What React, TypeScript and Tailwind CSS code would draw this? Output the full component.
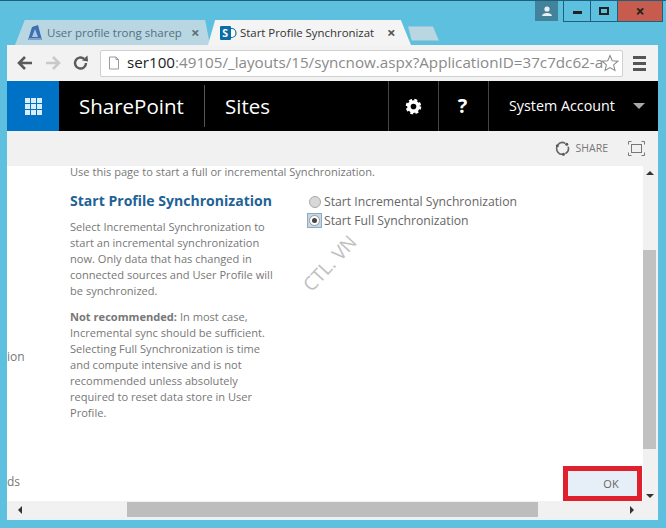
import React from "react";

const seg = "font-['Open_Sans','Noto_Sans',sans-serif]";

function Grid() {
  return (
    <div className="grid grid-cols-3 gap-[1px] w-[17px] h-[17px]">
      {Array.from({ length: 9 }).map((_, i) => (
        <div key={i} className="bg-[#d8ecfa]" />
      ))}
    </div>
  );
}

export default function App() {
  return (
    <div className={`relative w-[666px] h-[528px] overflow-hidden bg-[#5cc0de] flex flex-col border-t border-[#1d5f7c] ${seg}`}>
      {/* Title row */}
      <div className="h-[44px] flex justify-between pl-[15px] pr-[3px] shrink-0">
        <div className="flex items-end">
          <div className="w-[195px] h-[25px] bg-[#b9d6e3] flex items-center pl-[12px] [clip-path:polygon(5%_0,97.5%_0,100%_100%,0_100%)]">
            <svg width="17" height="17" viewBox="0 0 17 17" className="shrink-0">
              <path d="M1 16 L5 3 L11 1 L15 16 Z" fill="#3f6fae" />
              <path d="M5 13 L8 5 L11 13 Z" fill="#a9c6e6" />
              <path d="M1 16 H15 L14 14 H2 Z" fill="#7da4cf" />
            </svg>
            <span className="ml-[3px] text-[11.5px] text-[#56707f] whitespace-nowrap leading-none w-[141px]">User profile trong sharep</span>
            <span className="ml-[3px] text-[15px] font-bold text-[#5f6f78] leading-none">×</span>
          </div>
          <div className="-ml-[2px] w-[203px] h-[25px] bg-[#f4f4f4] flex items-center pl-[12px] [clip-path:polygon(3.5%_0,95%_0,100%_100%,0_100%)]">
            <svg width="17" height="16" viewBox="0 0 17 16" className="shrink-0">
              <circle cx="11.5" cy="8" r="4.5" fill="#fff" stroke="#0a6ea5" strokeWidth="1.2" />
              <rect x="0" y="1" width="11" height="14" rx="1" fill="#0a6ea5" />
              <text x="2.3" y="12" fontSize="10.5" fontWeight="700" fill="#fff" fontFamily="Open Sans">S</text>
            </svg>
            <span className="ml-[3px] text-[11.4px] text-[#333] whitespace-nowrap leading-none w-[145px]">Start Profile Synchronizat</span>
            <span className="ml-[2px] text-[15px] font-bold text-[#555] leading-none">×</span>
          </div>
          <div className="-ml-[3px] w-[31px] h-[15px] mb-[4px] bg-[#b9d6e3] border border-[#9cc3d6] [clip-path:polygon(0_0,80%_0,100%_100%,12%_100%)]" />
        </div>
        <div className="flex items-start">
          <div className="w-[23px] h-[20px] bg-[#43829b] flex items-center justify-center mr-[5px]">
            <svg width="12" height="10" viewBox="0 0 12 10">
              <circle cx="6" cy="3" r="2.6" fill="#e8f1f5" />
              <path d="M1 10 C1 6 11 6 11 10 Z" fill="#e8f1f5" />
            </svg>
          </div>
          <div className="w-[28px] h-[21px] border border-t-0 border-[#1d5f7c] flex items-center justify-center">
            <div className="w-[9px] h-[3px] mt-[3px] bg-[#222]" />
          </div>
          <div className="w-[26px] h-[21px] border-b border-[#1d5f7c] flex items-center justify-center">
            <div className="w-[10px] h-[8px] border-2 border-[#222]" />
          </div>
          <div className="w-[46px] h-[21px] bg-[#c75b4e] border border-t-0 border-[#1d5f7c] flex items-center justify-center text-[#222] text-[16px] font-bold leading-none">
            ×
          </div>
        </div>
      </div>

      {/* Chrome and page */}
      <div className="mx-[7px] mb-[8px] w-[651px] flex-1 flex flex-col min-h-0">
        {/* Toolbar */}
        <div className="h-[36px] bg-[#f2f2f2] flex items-center shrink-0 pl-[9px] pr-[9px]">
          <svg width="18" height="16" viewBox="0 0 18 16" className="shrink-0">
            <path d="M9 2 L3 8 L9 14 M3 8 H16" fill="none" stroke="#5a5a5a" strokeWidth="2.6" />
          </svg>
          <svg width="18" height="16" viewBox="0 0 18 16" className="shrink-0 ml-[10px]">
            <path d="M9 2 L15 8 L9 14 M15 8 H2" fill="none" stroke="#c9c9c9" strokeWidth="2.6" />
          </svg>
          <svg width="18" height="18" viewBox="0 0 18 18" className="shrink-0 ml-[10px]">
            <path d="M14 9 A5.5 5.5 0 1 1 12 4.8" fill="none" stroke="#5a5a5a" strokeWidth="2.4" />
            <path d="M10 6.5 L16 7.5 L15.5 1.5 Z" fill="#5a5a5a" />
          </svg>
          <div className="ml-[10px] w-[523px] h-[27px] bg-white border border-[#d0d0d0] rounded-[2px] flex items-center pl-[7px] pr-[24px] relative shrink-0">
            <svg width="12" height="14" viewBox="0 0 12 14" className="shrink-0">
              <path d="M1.5 1 H8 L10.5 3.5 V13 H1.5 Z M8 1 V3.5 H10.5" fill="#fff" stroke="#9a9a9a" />
            </svg>
            <span className="ml-[7px] text-[15.2px] whitespace-nowrap leading-none text-[#8a8a8a]">
              <span className="text-[#222]">ser100</span>:49105/_layouts/15/syncnow.aspx?ApplicationID=37c7dc62-a
            </span>
            <div className="absolute right-0 top-0 h-full w-[24px] flex items-center justify-center">
              <svg width="18" height="18" viewBox="0 0 24 24">
                <path d="M12 2 L15 9 L22.5 9.6 L16.8 14.5 L18.6 22 L12 18 L5.4 22 L7.2 14.5 L1.5 9.6 L9 9 Z" fill="#fff" stroke="#8a8a8a" strokeWidth="1.4" />
              </svg>
            </div>
          </div>
          <div className="ml-[10px] flex flex-col gap-[3px] w-[13px] shrink-0">
            <div className="h-[3px] bg-[#555]" />
            <div className="h-[3px] bg-[#555]" />
            <div className="h-[3px] bg-[#555]" />
          </div>
        </div>

        {/* Suite bar */}
        <div className="h-[50px] bg-black flex items-stretch shrink-0 text-white">
          <div className="w-[52px] bg-[#0072c6] flex items-center justify-center">
            <Grid />
          </div>
          <div className="w-[145px] flex items-center pl-[20px] text-[20.5px] leading-none">SharePoint</div>
          <div className="w-px my-[4px] bg-[#555]" />
          <div className="w-[183px] flex items-center pl-[20px] text-[20.5px] leading-none">Sites</div>
          <div className="w-px bg-[#444]" />
          <div className="w-[49px] flex items-center justify-center">
            <svg width="17" height="17" viewBox="0 0 24 24">
              <circle cx="12" cy="12" r="6.5" fill="none" stroke="#fff" strokeWidth="5" />
              <circle cx="12" cy="12" r="9" fill="none" stroke="#fff" strokeWidth="4" strokeDasharray="4 3.07" />
            </svg>
          </div>
          <div className="w-px bg-[#444]" />
          <div className="w-[49px] flex items-center justify-center pr-[2px] text-[20px] font-bold leading-none">?</div>
          <div className="w-px bg-[#444]" />
          <div className="flex-1 flex items-center pl-[20px] text-[14.3px] leading-none">
            <span className="whitespace-nowrap">System Account</span>
            <div className="ml-[18px] w-0 h-0 border-x-[6px] border-x-transparent border-t-[6px] border-t-[#a8a8a8]" />
          </div>
        </div>

        {/* Ribbon */}
        <div className="h-[35px] bg-[#f1f1f1] flex items-center justify-end pr-[13px] shrink-0">
          <svg width="15" height="15" viewBox="0 0 16 16">
            <path d="M3 4 A6.3 6.3 0 0 1 11 2.5 M14 6 A6.3 6.3 0 0 1 11 13.5 M8 14.3 A6.3 6.3 0 0 1 1.9 6.5" fill="none" stroke="#666" strokeWidth="1.7" />
            <circle cx="2.5" cy="5" r="1.6" fill="#555" />
            <circle cx="12.5" cy="3.5" r="1.6" fill="#555" />
            <circle cx="9" cy="14" r="1.6" fill="#555" />
          </svg>
          <span className="ml-[6px] text-[10.5px] text-[#777] leading-none">SHARE</span>
          <svg width="17" height="15" viewBox="0 0 17 15" className="ml-[20px]">
            <path d="M0.5 3.5 V0.5 H3.5 M13.5 0.5 H16.5 V3.5 M16.5 11.5 V14.5 H13.5 M3.5 14.5 H0.5 V11.5" fill="none" stroke="#777" />
            <rect x="3.5" y="3.5" width="10" height="8" fill="none" stroke="#777" />
          </svg>
        </div>

        {/* Page with vertical scrollbar */}
        <div className="flex-1 flex min-h-0">
          <div className="flex-1 bg-white flex relative overflow-hidden">
            <div className="w-[63px] shrink-0 text-[12px] text-[#777] leading-none">
              <div className="pt-[185px]">ion</div>
              <div className="pt-[113px]">ds</div>
            </div>
            <div className="w-[237px] shrink-0 text-[#777] text-[11.08px] leading-[16px]">
              <div className="whitespace-nowrap leading-[12px]">Use this page to start a full or incremental Synchronization.</div>
              <h2 className="mt-[13px] text-[14.05px] leading-[20px] font-bold text-[#1f6296] whitespace-nowrap">Start Profile Synchronization</h2>
              <p className="mt-[8px] w-[215px]">
                Select Incremental Synchronization to<br />start an incremental synchronization<br />now. Only data that has changed in<br />connected sources and User Profile will<br />be synchronized.
              </p>
              <p className="mt-[10px] w-[215px]">
                <b>Not recommended:</b> In most case,<br />Incremental sync should be sufficient.<br />Selecting Full Synchronization is time<br />and compute intensive and is not<br />recommended unless absolutely<br />required to reset data store in User<br />Profile.
              </p>
            </div>
            <div className="pt-[26px] text-[12.2px] text-[#666] leading-[19px]">
              <div className="flex items-center h-[19px] whitespace-nowrap">
                <div className="ml-[2px] w-[12px] h-[12px] rounded-full bg-[#d8d8d8] border border-[#a9a9a9]" />
                <span className="ml-[3px]">Start Incremental Synchronization</span>
              </div>
              <div className="flex items-center h-[19px] whitespace-nowrap">
                <div className="w-[15px] h-[15px] bg-[#c5d6e6] border border-[#8fa9c0] flex items-center justify-center">
                  <div className="w-[11px] h-[11px] rounded-full bg-white border border-[#999] flex items-center justify-center">
                    <div className="w-[5px] h-[5px] rounded-full bg-[#444]" />
                  </div>
                </div>
                <span className="ml-[2px]">Start Full Synchronization</span>
              </div>
            </div>
            <div className="absolute left-[289px] top-[88px] -rotate-[47deg] text-[19px] text-[#c0c0c0] leading-none whitespace-nowrap">CTL. VN</div>
            <div className="absolute right-[1px] bottom-0 w-[79px] h-[35px] border-[5px] border-[#e0202c] bg-[#e6eff7] flex items-center justify-center pl-[17px] text-[11px] text-[#666] leading-none">
              OK
            </div>
          </div>
          <div className="w-[15px] bg-[#f1f1f1] flex flex-col shrink-0">
            <div className="h-[84px] pl-[3px] pt-[5px]">
              <div className="w-0 h-0 border-x-[4px] border-x-transparent border-b-[4px] border-b-[#333]" />
            </div>
            <div className="h-[199px] w-[13px] bg-[#c1c1c1]" />
            <div className="flex-1" />
            <div className="mb-[3px] ml-[3px] w-0 h-0 border-x-[4px] border-x-transparent border-t-[4px] border-t-[#333]" />
          </div>
        </div>

        {/* Horizontal scrollbar */}
        <div className="h-[19px] bg-[#f1f1f1] border-b-2 border-[#e8f1f5] flex items-center shrink-0">
          <div className="w-[22px] flex justify-center ml-[2px]">
            <div className="w-0 h-0 border-y-[4px] border-y-transparent border-r-[4px] border-r-[#333]" />
          </div>
          <div className="ml-[96px] w-[411px] h-[15px] bg-[#bdbdbd]" />
          <div className="flex-1" />
          <div className="mr-[24px] w-0 h-0 border-y-[4px] border-y-transparent border-l-[4px] border-l-[#333]" />
        </div>
      </div>
    </div>
  );
}
